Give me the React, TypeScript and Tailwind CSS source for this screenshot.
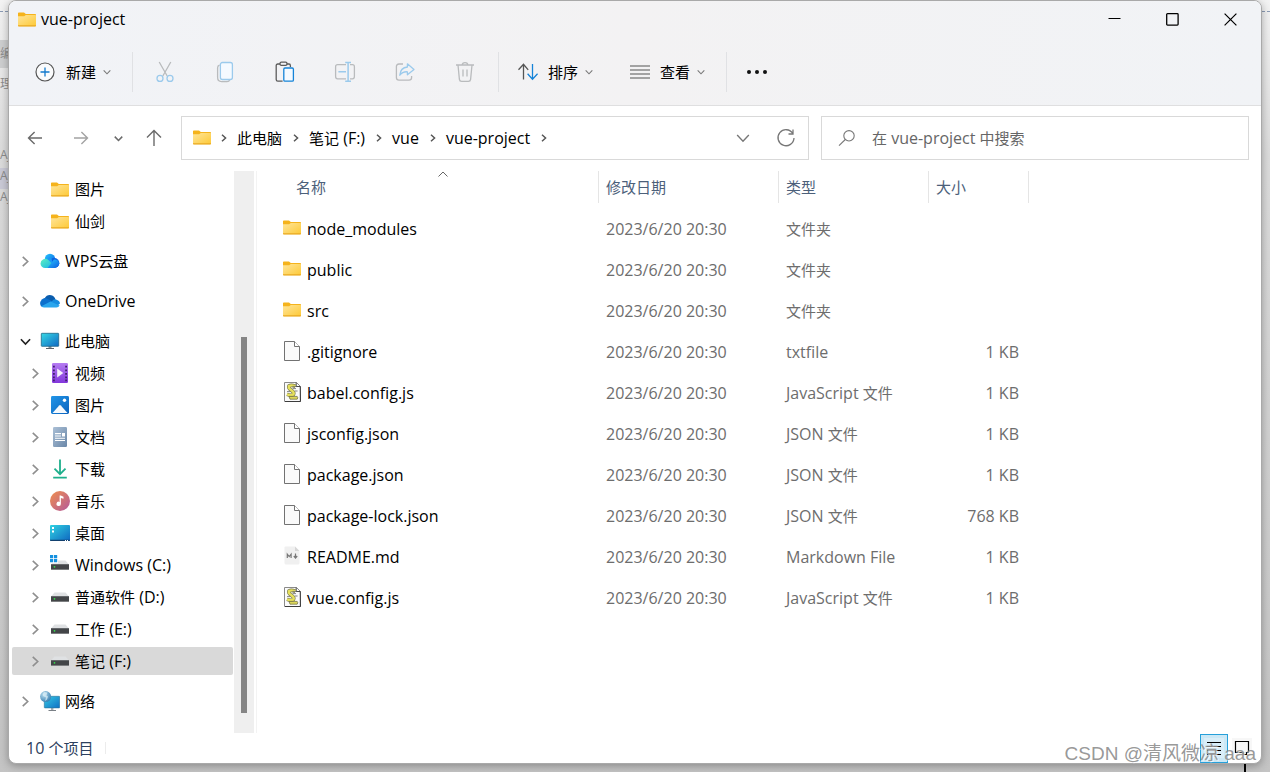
import React from "react";

type IconProps = { className?: string };

const CJK = /([\u4e00-\u9fff]+)/;

/* Han characters are set one step smaller than the Latin text beside them. */
function Label({ text }: { text: string }) {
  return (
    <>
      {text.split(CJK).map((part, i) =>
        CJK.test(part) ? (
          <span key={i} className="text-[15px]">{part}</span>
        ) : (
          part
        ),
      )}
    </>
  );
}

function Folder({ className = "" }: IconProps) {
  return (
    <svg className={className} width="18" height="15" viewBox="0 0 18 15" aria-hidden="true">
      <defs>
        <linearGradient id="folder" x1="0" y1="0" x2="1" y2="1">
          <stop offset="0" stopColor="#ffe59a" />
          <stop offset="1" stopColor="#fdc936" />
        </linearGradient>
      </defs>
      <path d="M0 1.2Q0 .5.8.5H6L7.8 2H17.2Q18 2 18 2.8V8H0Z" fill="#f5b31c" />
      <path d="M0 4.2H6.2L7.8 3H17.4Q18 3 18 3.6V13.6Q18 14.3 17.3 14.3H.7Q0 14.3 0 13.6Z" fill="url(#folder)" />
      <path d="M0 13.3V13.7Q0 14.5.8 14.5H17.2Q18 14.5 18 13.7V13.3Z" fill="#e9a923" />
    </svg>
  );
}

function Chevron({ dir, size, weight = 1.6, className = "" }: { dir: "right" | "down"; size: number; weight?: number; className?: string }) {
  return (
    <svg className={className} width={size} height={size} viewBox="0 0 12 12" fill="none" stroke="currentColor" strokeWidth={weight} aria-hidden="true">
      {dir === "right" ? <path d="M3 1 8.4 6 3 11" /> : <path d="M1 3.5 6 8.7 11 3.5" />}
    </svg>
  );
}

const WpsCloud = () => (
  <svg width="20" height="20" viewBox="0 0 20 20" aria-hidden="true">
    <defs>
      <linearGradient id="wpsA" x1="0" y1="0" x2="1" y2="1"><stop offset="0" stopColor="#5df0c0" /><stop offset="1" stopColor="#16b4e8" /></linearGradient>
      <linearGradient id="wpsB" x1="0" y1="0" x2="1" y2="1"><stop offset="0" stopColor="#27c5ff" /><stop offset="1" stopColor="#0a5de0" /></linearGradient>
    </defs>
    <circle cx="10" cy="8" r="5.2" fill="url(#wpsB)" />
    <circle cx="14.3" cy="12" r="5" fill="#0b5fe0" />
    <path d="M10 6Q14.5 10 10.5 17H6Q4 12 10 6Z" fill="#1a95f4" />
    <path d="M.5 12.4A4.7 4.7 0 0 1 8.4 9L14 14.8Q12.5 17 10 17H5.2A4.6 4.6 0 0 1 .5 12.4Z" fill="url(#wpsA)" />
    <path d="M14 8.5 7.5 17H14.5A4.8 4.8 0 0 0 19.3 12.2 4.6 4.6 0 0 0 14 8.5Z" fill="url(#wpsB)" />
  </svg>
);

const OneDrive = () => (
  <svg width="20" height="20" viewBox="0 0 20 20" aria-hidden="true">
    <path d="M4.5 7.5Q7 3.2 11.2 4.2 14.6 5 15.5 8.5L10 12 3.5 9Z" fill="#0a5cad" />
    <path d="M6.8 7.4Q3.8 6.4 1.8 8.6 0 10.6.1 13 .5 15.3 2.3 16L13 10.8Z" fill="#0c70cd" />
    <path d="M12.4 9.8Q14 8 16 8.4 19.8 9.4 20 12.6L17 15 10.5 11.3Z" fill="#168ce0" />
    <path d="M1.4 15.3 10.5 10.6 19.6 14.5Q18.6 16.5 16.4 16.5H4.2Q2.4 16.5 1.4 15.3Z" fill="#29a5ed" />
  </svg>
);

const Monitor = () => (
  <svg width="20" height="20" viewBox="0 0 20 20" aria-hidden="true">
    <defs><linearGradient id="mon" x1="0" y1="0" x2="1" y2="1"><stop offset="0" stopColor="#36d9e4" /><stop offset="1" stopColor="#0f68c4" /></linearGradient></defs>
    <path d="M8.5 15H11.5V17H8.5Z" fill="#8a9096" />
    <path d="M6 17H14V18H6Z" fill="#5c6268" />
    <rect x="1.3" y="2.3" width="17.4" height="13" rx=".6" fill="url(#mon)" stroke="#1e6788" strokeWidth=".8" />
  </svg>
);

const Video = () => (
  <svg width="20" height="20" viewBox="0 0 20 20" aria-hidden="true">
    <defs><linearGradient id="vid" x1="0" y1="0" x2="0" y2="1"><stop offset="0" stopColor="#b57cf2" /><stop offset="1" stopColor="#8237dc" /></linearGradient></defs>
    <rect x="2" y="0" width="16" height="20" rx="1.2" fill="url(#vid)" />
    {[2.8, 6.5, 10, 13.5, 16.4].map((y) => (
      <path key={y} d={`M3 ${y}h1.8v1.8h-1.8zM15.2 ${y}h1.8v1.8h-1.8z`} fill="#40206c" />
    ))}
    <path d="M7.2 5.6 13.3 10 7.2 14.4Z" fill="#f5f0fb" />
  </svg>
);

const Picture = () => (
  <svg width="20" height="20" viewBox="0 0 20 20" aria-hidden="true">
    <defs><linearGradient id="pic" x1="0" y1="0" x2="1" y2="1"><stop offset="0" stopColor="#2196e8" /><stop offset="1" stopColor="#0b62bd" /></linearGradient></defs>
    <rect x="1" y="1" width="18" height="18" rx="1.4" fill="url(#pic)" />
    <path d="M2.5 18 9.2 10.4Q10 9.7 10.8 10.4L17.5 18Z" fill="#f5f9fd" />
    <circle cx="14.5" cy="5.3" r="1.7" fill="#fff" />
  </svg>
);

const Doc = () => (
  <svg width="20" height="20" viewBox="0 0 20 20" aria-hidden="true">
    <defs><linearGradient id="doc" x1="0" y1="0" x2="1" y2="1"><stop offset="0" stopColor="#abc0d6" /><stop offset="1" stopColor="#6a87a8" /></linearGradient></defs>
    <rect x="3" y="0" width="14" height="20" rx="1.2" fill="url(#doc)" />
    <path d="M5 6H11V7.2H5ZM5 8.4H11V9.6H5ZM12 6H15V9.4H12ZM5 10.8H15V11.8H5ZM5 13H15V14H5Z" fill="#fff" />
  </svg>
);

const Download = () => (
  <svg width="20" height="20" viewBox="0 0 20 20" fill="none" stroke="#1eaf8c" strokeWidth="1.8" aria-hidden="true">
    <path d="M10 .5V15M4.5 9.6 10 15.2 15.5 9.6M3.2 18.6H16.8" />
  </svg>
);

const Music = () => (
  <svg width="20" height="20" viewBox="0 0 20 20" aria-hidden="true">
    <defs><linearGradient id="mus" x1="0" y1="0" x2="1" y2="1"><stop offset="0" stopColor="#f08f4e" /><stop offset="1" stopColor="#b3599c" /></linearGradient></defs>
    <circle cx="10" cy="10" r="10" fill="url(#mus)" />
    <path d="M9.6 4.4H10.8L13.5 5.8V7.8L10.9 6.9V12.8A2.2 2.2 0 1 1 9.6 10.9Z" fill="#fff" />
  </svg>
);

const Desktop = () => (
  <svg width="20" height="20" viewBox="0 0 20 20" aria-hidden="true">
    <defs><linearGradient id="desk" x1="0" y1="0" x2="1" y2="1"><stop offset="0" stopColor="#30d3e2" /><stop offset="1" stopColor="#0f66c0" /></linearGradient></defs>
    <rect x="0" y="2" width="20" height="16" rx="1" fill="url(#desk)" />
    <path d="M0 16.8H20V17Q20 18 19 18H1Q0 18 0 17Z" fill="#12406e" />
    <path d="M2 4H4V6H2ZM2 7.4H4V9.4H2ZM15 17H16V18H15ZM17 17H18V18H17Z" fill="#fff" />
  </svg>
);

const Drive = ({ system = false }: { system?: boolean }) => (
  <svg width="20" height="20" viewBox="0 0 20 20" aria-hidden="true">
    <path d="M4.5 5.5H15.5L19 9.5H1Z" fill="#dfe1e3" />
    <rect x="1" y="9" width="18" height="6" rx=".5" fill="#434548" />
    <path d="M1 9H19V10H1Z" fill="#65686b" />
    <path d="M1 14.2H19V15H1Z" fill="#8b8d8f" />
    <circle cx="4.5" cy="11.8" r=".9" fill="#35e04c" />
    {system && (
      <>
        <path d="M-.1 0H8V8.2H0Z" fill="#fff" />
        <path d="M0 0H3.2V3.2H0ZM4 0H7.2V3.2H4ZM0 4H3.2V7.2H0ZM4 4H7.2V7.2H4Z" fill="#1490df" />
      </>
    )}
  </svg>
);

const Network = () => (
  <svg width="20" height="20" viewBox="0 0 20 20" aria-hidden="true">
    <defs>
      <linearGradient id="net" x1="0" y1="0" x2="1" y2="1"><stop offset="0" stopColor="#36c9e4" /><stop offset="1" stopColor="#0f70c4" /></linearGradient>
      <radialGradient id="globe" cx=".35" cy=".3" r=".8"><stop offset="0" stopColor="#b9dff0" /><stop offset="1" stopColor="#2f78ad" /></radialGradient>
    </defs>
    <path d="M11 17H13.4V19H11Z" fill="#a9afb4" />
    <path d="M8.5 19H16V20H8.5Z" fill="#7a8086" />
    <rect x="4.3" y="5.3" width="15.4" height="11.6" rx=".6" fill="url(#net)" stroke="#2a7295" strokeWidth=".6" />
    <circle cx="5.6" cy="5.6" r="5.5" fill="url(#globe)" />
    <path d="M4 1Q2 3 3 5L6 6.5 5 10 7 8.5 8 5.6 6.4 4.4 7.5 1.4Z" fill="#e0f1f8" opacity=".7" />
  </svg>
);

const FileIcon = () => (
  <svg width="18" height="22" viewBox="0 0 18 22" aria-hidden="true">
    <path d="M1.5 1.5H11.5L16.5 6.5V20.5H1.5Z" fill="#fafafa" stroke="#727272" />
    <path d="M11.5 1.5V6.5H16.5" fill="#fff" stroke="#727272" />
  </svg>
);

const ScriptIcon = () => (
  <svg width="18" height="22" viewBox="0 0 18 22" aria-hidden="true">
    <path d="M1.5 1.5H13.5L17.3 5.3V20.5H1.5Z" fill="#fbfbfb" stroke="#8a8a8a" />
    <path d="M13.2 1.5V5.5H17.3L17.5 20.5H2" fill="none" stroke="#333" strokeWidth=".9" />
    <path d="M12.4 5.2Q8 3.6 6 5 5 7.4 8.6 9.4 11.6 11.4 10.4 13.6 8.4 15 4 13.4" fill="none" stroke="#77774a" strokeWidth="3.6" />
    <path d="M12.4 5.2Q8 3.6 6 5 5 7.4 8.6 9.4 11.6 11.4 10.4 13.6 8.4 15 4 13.4" fill="none" stroke="#e6e05c" strokeWidth="2.4" />
    <path d="M6 15.4H14.2Q15.4 16.8 14.2 18.2H7Z" fill="#ddd75a" stroke="#66663c" strokeWidth=".7" />
    <path d="M9.4 5.4H13.2M9.6 7.6H13M12 10H14.6M4 10.6H7.4" stroke="#666" strokeWidth=".8" />
  </svg>
);

const MarkdownIcon = () => (
  <svg width="18" height="22" viewBox="0 0 18 22" aria-hidden="true">
    <path d="M2.5 1.5H12L16.5 6V18Q16.5 19.5 15 19.5H3Q1.5 19.5 1.5 18V2.5Q1.5 1.5 2.5 1.5Z" fill="#f0f0f0" />
    <path d="M12 1.5V6H16.5Z" fill="#d6d6d6" />
    <path d="M4.3 13V9.2L6.2 11.6 8.1 9.2V13M12.5 8.6V12.6M10.8 11 12.5 13 14.2 11" fill="none" stroke="#777" strokeWidth="1.2" />
  </svg>
);

type Node = { label: string; icon: React.ReactNode; level: 0 | 1; arrow?: "right" | "down"; gap?: boolean; active?: boolean };

const tree: Node[] = [
  { label: "图片", icon: <Folder className="m-px" />, level: 1 },
  { label: "仙剑", icon: <Folder className="m-px" />, level: 1 },
  { label: "WPS云盘", icon: <WpsCloud />, level: 0, arrow: "right", gap: true },
  { label: "OneDrive", icon: <OneDrive />, level: 0, arrow: "right", gap: true },
  { label: "此电脑", icon: <Monitor />, level: 0, arrow: "down", gap: true },
  { label: "视频", icon: <Video />, level: 1, arrow: "right" },
  { label: "图片", icon: <Picture />, level: 1, arrow: "right" },
  { label: "文档", icon: <Doc />, level: 1, arrow: "right" },
  { label: "下载", icon: <Download />, level: 1, arrow: "right" },
  { label: "音乐", icon: <Music />, level: 1, arrow: "right" },
  { label: "桌面", icon: <Desktop />, level: 1, arrow: "right" },
  { label: "Windows (C:)", icon: <Drive system />, level: 1, arrow: "right" },
  { label: "普通软件 (D:)", icon: <Drive />, level: 1, arrow: "right" },
  { label: "工作 (E:)", icon: <Drive />, level: 1, arrow: "right" },
  { label: "笔记 (F:)", icon: <Drive />, level: 1, arrow: "right", active: true },
  { label: "网络", icon: <Network />, level: 0, arrow: "right", gap: true },
];

const folder = <Folder />;
const files = [
  { name: "node_modules", icon: folder, type: "文件夹", size: "" },
  { name: "public", icon: folder, type: "文件夹", size: "" },
  { name: "src", icon: folder, type: "文件夹", size: "" },
  { name: ".gitignore", icon: <FileIcon />, type: "txtfile", size: "1 KB" },
  { name: "babel.config.js", icon: <ScriptIcon />, type: "JavaScript 文件", size: "1 KB" },
  { name: "jsconfig.json", icon: <FileIcon />, type: "JSON 文件", size: "1 KB" },
  { name: "package.json", icon: <FileIcon />, type: "JSON 文件", size: "1 KB" },
  { name: "package-lock.json", icon: <FileIcon />, type: "JSON 文件", size: "768 KB" },
  { name: "README.md", icon: <MarkdownIcon />, type: "Markdown File", size: "1 KB" },
  { name: "vue.config.js", icon: <ScriptIcon />, type: "JavaScript 文件", size: "1 KB" },
];

const tools = [
  {
    name: "剪切",
    icon: (
      <>
        <path d="M5.2 1 13.2 15M16.8 1 8.8 15" stroke="#b9bbbd" />
        <circle cx="6" cy="17.4" r="3" stroke="#9bcaec" />
        <circle cx="16" cy="17.4" r="3" stroke="#9bcaec" />
      </>
    ),
  },
  {
    name: "复制",
    icon: (
      <>
        <path d="M5.6 4.2Q3.6 4.6 3.6 6.8V16.6Q3.6 20.6 7.6 20.6H13Q15.2 20.6 15.6 18.8" stroke="#b9bbbd" />
        <rect x="6.4" y="1.5" width="12" height="17" rx="2" stroke="#9bcaec" fill="#f5faff" />
      </>
    ),
  },
  {
    name: "粘贴",
    icon: (
      <>
        <path d="M6 3H3.8Q2.2 3 2.2 4.6V18.4Q2.2 20.2 3.8 20.2H8.6M12.8 3H15Q16.4 3 16.4 4.8V6" stroke="#5b5b5b" />
        <rect x="6" y="1.2" width="7" height="3.2" rx="1.4" stroke="#5b5b5b" />
        <rect x="9.8" y="7" width="9.6" height="13.2" rx="1.2" stroke="#1583d8" fill="#f5faff" />
      </>
    ),
  },
  {
    name: "重命名",
    icon: (
      <>
        <path d="M12 3.6H3.6Q1.6 3.6 1.6 5.6V15.6Q1.6 17.8 3.6 17.8H12M16 3.6H18.4Q20.4 3.6 20.4 5.6V15.6Q20.4 17.8 18.4 17.8H16" stroke="#b9bbbd" />
        <path d="M11.2 1.4H17M11.2 20.2H17M14.1 1.4V20.2M4.4 10.8H12" stroke="#9bcaec" strokeWidth="1.5" />
      </>
    ),
  },
  {
    name: "共享",
    icon: (
      <>
        <path d="M9 3H5Q2.4 3 2.4 5.6V16.6Q2.4 19.2 5 19.2H15Q17.6 19.2 17.6 16.6V15" stroke="#b9bbbd" />
        <path d="M13.4 2.8 20 8.4 13.4 13.8V10.8Q8.6 10.4 5.8 14.2 6.4 6.6 13.4 6Z" stroke="#9bcaec" strokeLinejoin="round" />
      </>
    ),
  },
  {
    name: "删除",
    icon: (
      <path d="M2 4H20M8.2 4Q8.2 1.6 11 1.6T13.8 4M4 4 5.4 18.4Q5.6 20.4 7.6 20.4H14.4Q16.4 20.4 16.6 18.4L18 4M9 8.6V15.4M13 8.6V15.4" stroke="#b9bbbd" />
    ),
  },
];

const crumbs = ["此电脑", "笔记 (F:)", "vue", "vue-project"];

export default function App() {
  return (
    <div className="relative isolate flex h-screen min-h-[772px] overflow-hidden pr-2 pb-2 pl-2 font-['Open_Sans','Noto_Sans_CJK_SC',sans-serif] text-base leading-5 text-black">
      <div aria-hidden="true" className="absolute inset-0 -z-10 flex flex-col items-start bg-linear-to-b from-[#f3f3f3] from-0% via-[#dcdcdc] via-20% to-[#c4c4c4] to-100% text-xs text-[#8c8c8c]">
        <div className="h-[12px] w-full border-b border-dashed border-[#8b9bb4]" />
        <div className="mt-7 h-7 bg-[#cecfd0] leading-7">编</div>
        <div className="mt-2 h-5">理</div>
        <div className="mt-[51px] h-[21px]">Aj</div>
        <div className="h-[21px] bg-[#cacad6]">Aj</div>
        <div className="h-[21px]">Aj</div>
        <div className="mt-auto mr-6 h-2 w-0.5 self-end bg-black" />
      </div>

      <main className="flex min-w-0 flex-1 flex-col overflow-hidden rounded-lg border border-[#a9a9a9] bg-white shadow-[0_2px_8px_rgba(0,0,0,0.3)]">
        <header className="border-b border-[#dfdfe0] bg-linear-to-r from-[#f1f3f7] via-[#f3f2f3] to-[#f1f3f6]">
          <div className="flex h-9 items-center">
            <Folder className="ml-[9px]" />
            <h1 className="ml-[5px] flex-1">vue-project</h1>
            <div className="mr-0.5 flex">
              <button aria-label="最小化" className="flex h-9 w-[58px] items-center justify-center">
                <svg width="13" height="13" viewBox="0 0 13 13" stroke="#000" fill="none"><path d="M.5 5.5H12.5" /></svg>
              </button>
              <button aria-label="最大化" className="flex h-9 w-[58px] items-center justify-center">
                <svg width="13" height="13" viewBox="0 0 13 13" stroke="#000" fill="none"><rect x=".7" y=".7" width="11.4" height="11.4" rx=".8" strokeWidth="1.3" /></svg>
              </button>
              <button aria-label="关闭" className="flex h-9 w-[58px] items-center justify-center">
                <svg width="13" height="13" viewBox="0 0 13 13" stroke="#000" strokeWidth="1.2" fill="none"><path d="M.6.6 12.4 12.4M12.4.6.6 12.4" /></svg>
              </button>
            </div>
          </div>

          <div className="flex h-[68px] items-center pt-0.5" role="toolbar" aria-label="命令">
            <button className="flex h-10 w-[123px] items-center pl-[26px]">
              <svg width="20" height="20" viewBox="0 0 20 20" fill="none" aria-hidden="true">
                <circle cx="10" cy="10" r="9" stroke="#555" strokeWidth="1.2" fill="#fafbfc" />
                <path d="M10 5.5V14.5M5.5 10H14.5" stroke="#1279cc" strokeWidth="1.3" />
              </svg>
              <span className="ml-[11px] text-[15px]">新建</span>
              <Chevron dir="down" size={8} className="ml-[7px] text-[#777]" />
            </button>
            <div className="mr-0.5 h-10 w-px bg-[#e0e1e4]" />
            {tools.map((t) => (
              <button key={t.name} aria-label={t.name} className="flex h-10 w-15 items-center justify-center">
                <svg width="22" height="22" viewBox="0 0 22 22" fill="none" strokeWidth="1.3">{t.icon}</svg>
              </button>
            ))}
            <div className="ml-[3px] h-10 w-px bg-[#e0e1e4]" />
            <button className="flex h-10 w-[112px] items-center pl-[19px]">
              <svg width="20" height="18" viewBox="0 0 20 18" fill="none" strokeWidth="1.3" aria-hidden="true">
                <path d="M5.5 16.5V1.5M.5 6.8 5.5 1.3 10.2 6.8" stroke="#555" />
                <path d="M14.5 1V16M9.6 10.8 14.5 16.2 19.6 10.8" stroke="#1583d8" />
              </svg>
              <span className="ml-2.5 text-[15px]">排序</span>
              <Chevron dir="down" size={8} className="ml-[7px] text-[#777]" />
            </button>
            <button className="flex h-10 w-[115px] items-center pl-[19px]">
              <svg width="20" height="14" viewBox="0 0 20 14" stroke="#555" aria-hidden="true"><path d="M0 1H20M0 5H20M0 9H20M0 13H20" strokeWidth="1.2" /></svg>
              <span className="ml-2.5 text-[15px]">查看</span>
              <Chevron dir="down" size={8} className="ml-[7px] text-[#777]" />
            </button>
            <div className="h-10 w-px bg-[#e0e1e4]" />
            <button aria-label="更多" className="flex h-10 w-15 items-center justify-center">
              <svg width="22" height="6" viewBox="0 0 22 6" fill="#111"><circle cx="3" cy="3" r="2" /><circle cx="11" cy="3" r="2" /><circle cx="19" cy="3" r="2" /></svg>
            </button>
          </div>
        </header>

        <div className="flex items-center pt-2.5 pr-3 pb-[11px]">
          <nav aria-label="导航" className="flex w-[172px] shrink-0 items-center pl-[17px] text-[#6a6a6a]">
            <button aria-label="后退">
              <svg width="18" height="18" viewBox="0 0 18 18" fill="none" stroke="currentColor" strokeWidth="1.4"><path d="M16 9H2.5M8.6 3 2.5 9 8.6 15" /></svg>
            </button>
            <button aria-label="前进" className="ml-7 text-[#a3a3a3]">
              <svg width="18" height="18" viewBox="0 0 18 18" fill="none" stroke="currentColor" strokeWidth="1.4"><path d="M2 9H15.5M9.4 3 15.5 9 9.4 15" /></svg>
            </button>
            <button aria-label="最近的位置" className="ml-6">
              <Chevron dir="down" size={9} weight={2} />
            </button>
            <button aria-label="上移" className="ml-[22px]">
              <svg width="18" height="18" viewBox="0 0 18 18" fill="none" stroke="currentColor" strokeWidth="1.4"><path d="M9 17V1.5M2 8.6 9 1.5 16 8.6" /></svg>
            </button>
          </nav>
          <div className="flex h-11 min-w-0 flex-1 items-center border border-[#d9d9d9] pb-px pl-[11px]">
            <Folder />
            <Chevron dir="right" size={8} weight={2.2} className="ml-[9px] text-[#555]" />
            <ol className="flex min-w-0 flex-1 items-center">
              {crumbs.map((c) => (
                <li key={c} className="flex items-center">
                  <a href="#" className="ml-[9px] whitespace-nowrap"><Label text={c} /></a>
                  <Chevron dir="right" size={8} weight={2.2} className="ml-2.5 text-[#555]" />
                </li>
              ))}
            </ol>
            <button aria-label="历史记录" className="mr-[26px] text-[#777]"><Chevron dir="down" size={14} weight={1.2} /></button>
            <button aria-label="刷新" className="mr-3">
              <svg width="20" height="20" viewBox="0 0 20 20" fill="none" stroke="#777" strokeWidth="1.3"><path d="M16.8 5.5A8 8 0 1 0 18 10M17 1.5V6H12.5" /></svg>
            </button>
          </div>
          <label className="ml-3 flex h-11 w-[428px] items-center border border-[#d9d9d9] pl-4">
            <svg width="18" height="18" viewBox="0 0 18 18" fill="none" stroke="#777" strokeWidth="1.1" aria-hidden="true"><circle cx="11" cy="6.8" r="5.2" /><path d="M7.3 10.5 1 16.6" /></svg>
            <span className="relative ml-4 flex h-full flex-1 items-center text-[#666]">
              <span className="pointer-events-none absolute"><Label text="在 vue-project 中搜索" /></span>
              <input type="search" aria-label="在 vue-project 中搜索" className="h-full w-full bg-transparent outline-none" />
            </span>
          </label>
        </div>

        <div className="flex min-h-0 flex-1">
          <aside className="w-[225px] shrink-0 overflow-hidden pt-0.5">
            <ul>
              {tree.map((n, i) => (
                <li key={i} className={n.gap ? "pt-2.5 pb-0.5" : "py-0.5"}>
                  <a
                    href="#"
                    className={
                      "mr-px ml-[3px] flex h-7 items-center rounded-xs whitespace-nowrap " +
                      (n.level ? "pl-[18px] " : "pl-2 ") +
                      (n.active ? "bg-[#d9d9d9]" : "")
                    }
                  >
                    <span className="flex w-5 items-center">
                      {n.arrow === "down" && <Chevron dir="down" size={11} weight={1.8} className="text-[#222]" />}
                      {n.arrow === "right" && <Chevron dir="right" size={11} weight={1.8} className="text-[#8f8f8f]" />}
                    </span>
                    {n.icon}
                    <span className="ml-[5px]"><Label text={n.label} /></span>
                  </a>
                </li>
              ))}
            </ul>
          </aside>
          <div aria-hidden="true" className="flex w-5 shrink-0 flex-col items-center bg-[#efefef]">
            <div className="mt-[166px] h-[376px] w-1.5 bg-[#858585]" />
          </div>
          <div className="ml-0.5 w-px bg-[#f3f3f3]" />
          <section className="min-w-0 flex-1 overflow-hidden">
            <table className="table-fixed border-separate border-spacing-0">
              <colgroup>
                <col className="w-[342px]" />
                <col className="w-[180px]" />
                <col className="w-[150px]" />
                <col className="w-[100px]" />
              </colgroup>
              <thead>
                <tr className="h-8 text-left text-[15px] text-[#4c607a] [&>th]:border-r [&>th]:border-[#e5e5e5] [&>th]:p-0 [&>th]:font-normal">
                  <th className="relative" aria-sort="ascending">
                    <span className="pl-[39px]">名称</span>
                    <svg className="absolute top-0 left-[181px]" width="10" height="6" viewBox="0 0 10 6" fill="none" stroke="#666"><path d="M.5 5.5 5 1 9.5 5.5" /></svg>
                  </th>
                  <th><span className="pl-[7px]">修改日期</span></th>
                  <th><span className="pl-[7px]">类型</span></th>
                  <th><span className="pl-[7px]">大小</span></th>
                </tr>
              </thead>
              <tbody className="before:block before:h-[5px]">
                {files.map((f) => (
                  <tr key={f.name} className="h-[41px] text-[#6d6d6d] [&>td]:p-0">
                    <td>
                      <span className="flex items-center gap-1.5 pl-[26px] text-black">
                        <span className="flex h-6 w-[18px] items-center pb-0.5">{f.icon}</span>
                        {f.name}
                      </span>
                    </td>
                    <td className="whitespace-nowrap"><span className="pl-[7px]">2023/6/20 20:30</span></td>
                    <td className="whitespace-nowrap"><span className="pl-[7px]"><Label text={f.type} /></span></td>
                    <td className="text-right whitespace-nowrap"><span className="pr-2.5">{f.size}</span></td>
                  </tr>
                ))}
              </tbody>
            </table>
          </section>
        </div>

        <footer className="flex h-[30px] shrink-0 items-center pl-[17px] text-[#2c405e]">
          <span><Label text="10 个项目" /></span>
          <span className="ml-3 h-3 w-px bg-[#ececec]" />
          <span className="flex-1" />
          <button aria-label="详细信息" className="flex h-[29px] w-7 items-center justify-center border border-[#26a0da] bg-[#cbe8f6]">
            <svg width="20" height="20" viewBox="0 0 20 20" stroke="#000"><path d="M0 0H20V20H0Z" fill="#d9eef8" stroke="none" /><path d="M3 4.5H17M3 8.5H17M3 12.5H17M3 16.5H17" /></svg>
          </button>
          <button aria-label="大图标" className="mr-[9px] ml-1 flex h-5 w-5 items-center justify-center bg-[#f7f7f7]">
            <svg width="16" height="16" viewBox="0 0 16 16" stroke="#000" fill="none"><path d="M9 12.5H1.5V1.5H14.5V12.5H12M9.5 12V14.5H12.5V12" strokeWidth="1.2" /></svg>
          </button>
        </footer>
      </main>

      <div className="pointer-events-none absolute right-[14px] bottom-1 font-['Liberation_Sans','Noto_Sans_CJK_SC',sans-serif] text-[19px] leading-7 text-[#8c8c8c]/90 [text-shadow:1px_1px_0_#ffffffb0]">
        CSDN @清风微凉 aaa
      </div>
    </div>
  );
}
